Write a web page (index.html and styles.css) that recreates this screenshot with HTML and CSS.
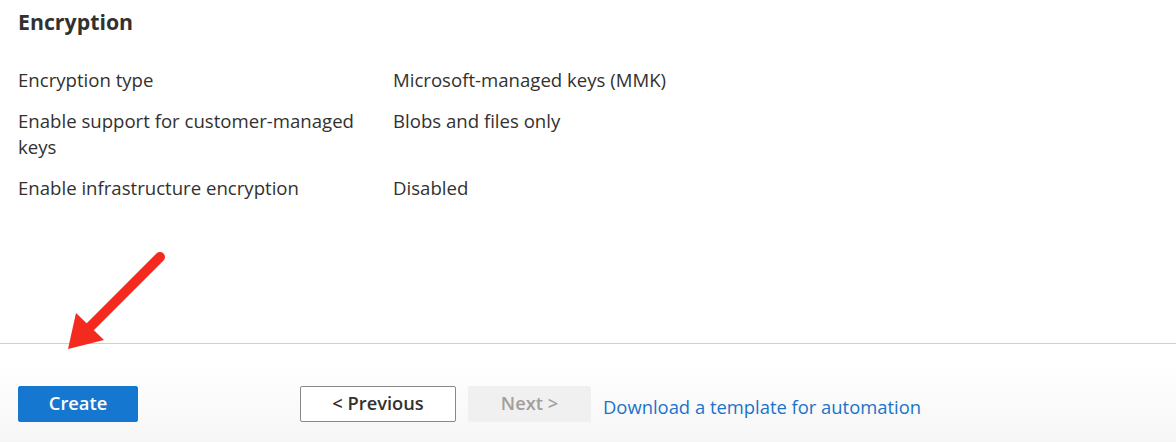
FILE: index.html
```html
<!DOCTYPE html>
<html lang="en">
<head>
<meta charset="utf-8">
<title>Encryption</title>
<link rel="stylesheet" href="styles.css">
</head>
<body>
<div class="page">
  <main class="content">
    <h2 class="heading">Encryption</h2>
    <dl class="summary">
      <div class="row"><dt>Encryption type</dt><dd>Microsoft-managed keys (MMK)</dd></div>
      <div class="row"><dt>Enable support for customer-managed keys</dt><dd>Blobs and files only</dd></div>
      <div class="row"><dt>Enable infrastructure encryption</dt><dd>Disabled</dd></div>
    </dl>
  </main>
  <footer class="footer">
    <button class="btn btn-primary">Create</button>
    <div class="nav">
      <button class="btn btn-secondary">&lt; Previous</button>
      <button class="btn btn-disabled" disabled>Next &gt;</button>
      <a class="link" href="#">Download a template for automation</a>
    </div>
  </footer>
  <svg class="arrow" width="120" height="120" viewBox="0 0 120 120" aria-hidden="true">
    <line x1="110" y1="17" x2="36" y2="91" stroke="#f52a1f" stroke-width="10" stroke-linecap="round"/>
    <polygon points="18,109 26,73 54,100" fill="#f52a1f"/>
  </svg>
</div>
</body>
</html>
```
FILE: styles.css
```css
* { box-sizing: border-box; }
html, body { margin: 0; padding: 0; background: #fff; }
body {
  font-family: "Open Sans", "Noto Sans", sans-serif;
  color: #323130;
  width: 1176px;
  height: 442px;
  overflow: hidden;
}
.page {
  position: relative;
  height: 442px;
  display: flex;
  flex-direction: column;
}
.content {
  flex: 1;
  padding: 6px 18px 0;
  border-bottom: 1px solid #cfcfcf;
}
.heading {
  margin: 0;
  font-size: 21.3px;
  font-weight: 700;
  line-height: 32px;
  color: #323130;
}
.summary {
  margin: 29px 0 0;
}
.row {
  display: grid;
  grid-template-columns: 375px 500px;
  margin-bottom: 15px;
  font-size: 18.6px;
  line-height: 26px;
}
.row dt { margin: 0; padding-right: 20px; }
.row dd { margin: 0; }
.footer {
  height: 98px;
  flex: none;
  display: flex;
  align-items: flex-start;
  padding: 42px 18px 0;
  background: linear-gradient(#ffffff 20%, #f6f6f6 100%);
}
.nav {
  display: flex;
  align-items: center;
  gap: 12px;
  margin-left: 162px;
}
.btn {
  font-family: inherit;
  font-size: 18.3px;
  height: 36px;
  line-height: 32px;
  border-radius: 2px;
  padding: 0 0 2px;
  cursor: pointer;
}
.btn-primary {
  width: 120px;
  background: #1677d1;
  border: 1px solid #1677d1;
  color: #fff;
  font-weight: 600;
}
.btn-secondary {
  width: 156px;
  background: #fff;
  border: 1px solid #8a8886;
  color: #323130;
  font-weight: 600;
}
.btn-disabled {
  width: 123px;
  background: #f0f0f0;
  border: 1px solid #f0f0f0;
  color: #a19f9d;
  font-weight: 600;
  cursor: default;
}
.link {
  font-size: 18.4px;
  color: #1a73c9;
  text-decoration: none;
  margin-top: 5px;
}
.arrow {
  position: absolute;
  left: 50px;
  top: 240px;
}
```
